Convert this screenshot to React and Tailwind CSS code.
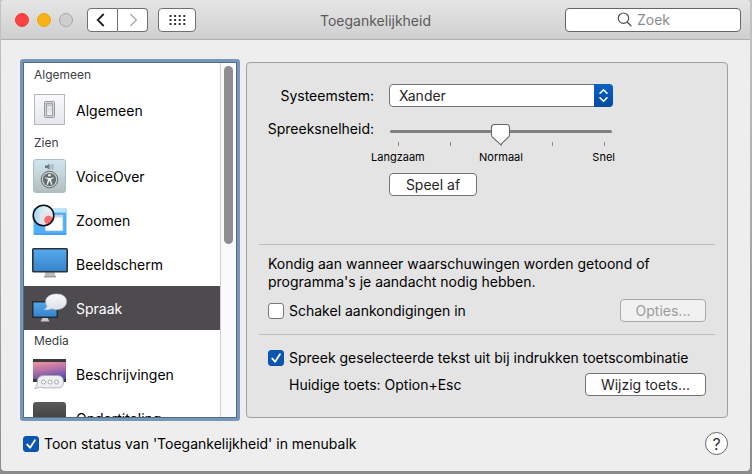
import { useState } from "react";

function SwitchIcon() {
  return (
    <svg width="34" height="34" viewBox="0 0 34 34" aria-hidden="true">
      <defs>
        <linearGradient id="sw" x1="0" y1="0" x2="0" y2="1">
          <stop offset="0" stopColor="#fafafd" />
          <stop offset="1" stopColor="#e4e6ec" />
        </linearGradient>
        <linearGradient id="swk" x1="0" y1="0" x2="0" y2="1">
          <stop offset="0" stopColor="#c4c5c9" />
          <stop offset="1" stopColor="#f7f7f9" />
        </linearGradient>
      </defs>
      <rect x="1.5" y="1.5" width="30" height="30" fill="url(#sw)" stroke="#b6b7bb" />
      <rect x="11.5" y="8.5" width="10" height="16" rx="1" fill="#d5d6da" stroke="#97989c" />
      <rect x="13.5" y="10.5" width="6" height="12" fill="url(#swk)" stroke="#a3a4a8" />
      <path d="M14 14.5h5" stroke="#f4f4f6" />
    </svg>
  );
}

function VoiceOverIcon() {
  return (
    <svg width="34" height="34" viewBox="0 0 34 34" aria-hidden="true">
      <defs>
        <linearGradient id="vo" x1="0" y1="0" x2="0" y2="1">
          <stop offset="0" stopColor="#cfe6ef" />
          <stop offset="0.5" stopColor="#c3d3d8" />
          <stop offset="1" stopColor="#b2bcbd" />
        </linearGradient>
      </defs>
      <rect x="0.5" y="0.5" width="32" height="33" rx="2.5" fill="url(#vo)" stroke="#a9bcc2" />
      <path d="M12 6.5h2l2.5-1.8v6L14 9h-2z" fill="#6b7880" />
      <path d="M17.8 5.8q1 2 0 4M19.5 5q1.400 2.800 0 5.600" fill="none" stroke="#8b989e" strokeWidth="0.8" />
      <circle cx="16.500" cy="20.500" r="8.300" fill="#c9d2d4" stroke="#5f6668" strokeWidth="1" />
      <circle cx="16.500" cy="20.500" r="6.600" fill="#646c6f" />
      <circle cx="16.500" cy="16.300" r="1.300" fill="#eef3f4" />
      <path d="M12.300 18.300l3 .6h2.400l3-.6.200 1-2.700.8.200 2 1 3.500-1 .3-1.600-3.700h-.6l-1.600 3.700-1-.3 1-3.500.2-2-2.700-.8z" fill="#eef3f4" />
    </svg>
  );
}

function ZoomIcon() {
  return (
    <svg width="36" height="34" viewBox="0 0 36 34" aria-hidden="true">
      <defs>
        <linearGradient id="zl" x1="0" y1="0" x2="1" y2="0">
          <stop offset="0" stopColor="#9ed4f7" />
          <stop offset="0.5" stopColor="#dcecf5" />
          <stop offset="1" stopColor="#f2f2f4" />
        </linearGradient>
      </defs>
      <rect x="1.500" y="5" width="33" height="27" rx="1.500" fill="#50b0fa" />
      <path d="M1.500 9.500V6.500q0-1.500 1.500-1.500h30q1.500 0 1.500 1.500v3z" fill="#bfe3fb" />
      <path d="M1.500 31h33" stroke="#3a95e2" />
      <rect x="13" y="12" width="18" height="16" fill="#fff" stroke="#8fb5cf" strokeWidth="0.7" />
      <rect x="14" y="12" width="17" height="2.500" fill="#cbd3d9" />
      <circle cx="11.500" cy="12.500" r="10.300" fill="url(#zl)" />
      <path d="M8 10l13-1 .8 4-2 5-5 3.500H8z" fill="#e3e4e8" />
      <circle cx="16.500" cy="17" r="4.300" fill="#f56b6e" />
      <circle cx="11.500" cy="12.500" r="10.300" fill="none" stroke="#0d1117" strokeWidth="1.600" />
    </svg>
  );
}

function DisplayIcon() {
  return (
    <svg width="36" height="34" viewBox="0 0 36 34" aria-hidden="true">
      <defs>
        <linearGradient id="dp" x1="0" y1="0" x2="0" y2="1">
          <stop offset="0" stopColor="#58aaef" />
          <stop offset="1" stopColor="#3583c8" />
        </linearGradient>
      </defs>
      <path d="M13.500 25h9l1 4.500h-11z" fill="#b9babc" />
      <path d="M12 29h12v1.500H12z" fill="#9c9d9f" />
      <rect x="0.800" y="1.800" width="34.400" height="23" rx="0.800" fill="url(#dp)" stroke="#2a323b" strokeWidth="1.600" />
    </svg>
  );
}

function SpeechIcon() {
  return (
    <svg width="36" height="34" viewBox="0 0 36 34" aria-hidden="true">
      <defs>
        <linearGradient id="sd" x1="0" y1="0" x2="0" y2="1">
          <stop offset="0" stopColor="#56a6ea" />
          <stop offset="1" stopColor="#3583c8" />
        </linearGradient>
        <linearGradient id="sb" x1="0" y1="0" x2="0" y2="1">
          <stop offset="0" stopColor="#fafafc" />
          <stop offset="1" stopColor="#dcdfe6" />
        </linearGradient>
      </defs>
      <path d="M11 26h4l2.500 4.500h-9z" fill="#c8c8ca" />
      <rect x="0.800" y="10.800" width="24.500" height="15.500" fill="url(#sd)" stroke="#202a35" strokeWidth="1.400" />
      <path d="M24.500 3C31 3 34.500 6.200 34.500 10.500S31 18.500 24.500 18.500c-2 0-3.500-.3-5-.9-1.500.9-4 1.300-7.500.9 1.900-.9 2.900-2 3.200-3.400-1-1.300-1.500-2.900-1.500-4.600C13.700 6.200 18 3 24.500 3z" fill="url(#sb)" stroke="#c9ccd4" strokeWidth="0.600" />
    </svg>
  );
}

function DescriptionsIcon() {
  return (
    <svg width="34" height="34" viewBox="0 0 34 34" aria-hidden="true">
      <defs>
        <linearGradient id="ds" x1="0.200" y1="0" x2="0.500" y2="1">
          <stop offset="0" stopColor="#ec8f9f" />
          <stop offset="0.500" stopColor="#b270a8" />
          <stop offset="1" stopColor="#5a4fa8" />
        </linearGradient>
      </defs>
      <rect x="0" y="2" width="33" height="23" fill="#3a393b" />
      <rect x="0" y="5" width="33" height="17" fill="url(#ds)" />
      <path d="M11 18.500h13.500q6 0 6 6.200t-6 6.200H11c-2 0-3-.4-4-1-1.200 1-3 1.400-5.500 1.400 1.500-1.300 2.400-2.500 2.700-4.400Q3.500 18.500 11 18.500z" fill="#eeeff3" stroke="#a4a6ad" strokeWidth="0.800" />
      <g fill="#fff" stroke="#a0a2a8" strokeWidth="0.900">
        <circle cx="10.500" cy="25" r="2" />
        <circle cx="17" cy="25" r="2" />
        <circle cx="23.500" cy="25" r="2" />
      </g>
    </svg>
  );
}

function CaptionsIcon() {
  return (
    <svg width="34" height="34" viewBox="0 0 34 34" aria-hidden="true">
      <defs>
        <linearGradient id="cc" x1="0" y1="0" x2="0" y2="1">
          <stop offset="0" stopColor="#5a5a5b" />
          <stop offset="1" stopColor="#2c2c2d" />
        </linearGradient>
      </defs>
      <rect x="0" y="1" width="33" height="33" rx="3" fill="url(#cc)" />
    </svg>
  );
}

const groups = [
  { title: "Algemeen", items: [{ name: "Algemeen", Icon: SwitchIcon }] },
  {
    title: "Zien",
    items: [
      { name: "VoiceOver", Icon: VoiceOverIcon },
      { name: "Zoomen", Icon: ZoomIcon },
      { name: "Beeldscherm", Icon: DisplayIcon },
      { name: "Spraak", Icon: SpeechIcon },
    ],
  },
  {
    title: "Media",
    items: [
      { name: "Beschrijvingen", Icon: DescriptionsIcon },
      { name: "Ondertiteling", Icon: CaptionsIcon },
    ],
  },
];

function Sidebar() {
  const [selected, setSelected] = useState("Spraak");
  return (
    <nav
      aria-label="Categorieën"
      className="flex h-[362px] w-[220px] shrink-0 rounded-[3px] border-3 border-[#7896b8]"
    >
      <div className="flex min-w-0 flex-1 border border-[#4f6a8a] bg-white">
        <div className="min-w-0 flex-1 overflow-y-auto pt-px [scrollbar-width:none]">
          {groups.map((group) => (
            <section key={group.title} className="first:[&>h2]:mb-0.5">
              <h2 className="h-[22px] pl-2.5 text-xs leading-[22px] text-[#404040]">{group.title}</h2>
              <ul>
                {group.items.map(({ name, Icon }) => (
                  <li key={name}>
                    <button
                      type="button"
                      onClick={() => setSelected(name)}
                      className={
                        name === selected
                          ? "flex h-11 w-full items-center bg-[#4d4b4d] pl-2 text-left text-white"
                          : "flex h-11 w-full items-center pl-2 text-left text-black"
                      }
                    >
                      <span className="flex w-[36px] shrink-0 justify-center">
                        <Icon />
                      </span>
                      <span className="pt-0.5 pl-2">{name}</span>
                    </button>
                  </li>
                ))}
              </ul>
            </section>
          ))}
        </div>
        <div className="w-4 shrink-0 border-l border-[#d0d0d0] bg-[#fafafa] px-[3px] pt-[3px]">
          <div className="h-[178px] rounded-full bg-[#8e8e8e]" />
        </div>
      </div>
    </nav>
  );
}

function Checkbox({ id, label, defaultChecked }) {
  return (
    <div className="flex items-center gap-[5px]">
      <span className="relative flex size-4 shrink-0">
        <input
          id={id}
          type="checkbox"
          defaultChecked={defaultChecked}
          className="peer size-full appearance-none rounded-[3px] border border-[#777] bg-white checked:border-[#0a53ab] checked:bg-[#0a56b0]"
        />
        <svg
          viewBox="0 0 15 15"
          aria-hidden="true"
          className="pointer-events-none absolute inset-0 hidden peer-checked:block"
        >
          <path d="M4 8l2.600 3L11.200 4" fill="none" stroke="#fff" strokeWidth="1.700" strokeLinecap="round" strokeLinejoin="round" />
        </svg>
      </span>
      <label htmlFor={id}>{label}</label>
    </div>
  );
}

function PushButton({ children, disabled, className }) {
  return (
    <button
      type="button"
      disabled={disabled}
      className={`h-[23px] rounded-[4px] border border-[#737373] bg-white leading-[20px] text-[#262626] disabled:border-[#a9a9a9] disabled:bg-[#f1f1f1] disabled:text-[#9b9b9b] ${className}`}
    >
      {children}
    </button>
  );
}

function SpeedSlider() {
  const [speed, setSpeed] = useState(50);
  return (
    <div className="w-[224px]">
      <div className="relative h-[24px]">
        <svg width="224" height="24" viewBox="0 0 224 24" aria-hidden="true">
          <rect x="1" y="7" width="222" height="3" rx="1.500" fill="#808080" />
          <path d="M9.500 19v4M61.500 19v4M112.500 19v4M163.500 19v4M215.500 19v4" stroke="#8a8a8a" />
          <path
            transform={`translate(${(speed - 50) * 2.06} 0)`}
            d="M105.500 1.500h12q3 0 3 3v7q0 1.500-1 2.600l-8 7.500-8-7.500q-1-1.100-1-2.600v-7q0-3 3-3z"
            fill="#fff"
            stroke="#666"
            strokeWidth="1.100"
          />
        </svg>
        <input
          id="speed"
          type="range"
          value={speed}
          onChange={(event) => setSpeed(Number(event.target.value))}
          className="absolute inset-0 w-full opacity-0"
        />
      </div>
      <div className="-mx-5 mt-0.5 grid grid-cols-3 text-[11px] leading-4 text-black">
        <span className="pl-0.5">Langzaam</span>
        <span className="text-center">Normaal</span>
        <span className="pr-[18px] text-right">Snel</span>
      </div>
    </div>
  );
}

function SpeechPanel() {
  return (
    <main className="flex min-w-0 flex-1 flex-col rounded-[4px] border border-[#a0a0a0] bg-[#e4e4e4] px-3">
      <div className="grid h-[181px] shrink-0 grid-cols-[115px_1fr] content-start gap-x-[15px] pt-[21px]">
        <label htmlFor="voice" className="text-right leading-[23px]">
          Systeemstem:
        </label>
        <div className="relative h-[23px] w-[224px]">
          <select
            id="voice"
            className="block size-full appearance-none rounded-[4px] border border-[#737373] bg-white pl-[9px] leading-[20px] text-[#262626]"
          >
            <option>Xander</option>
          </select>
          <span className="pointer-events-none absolute inset-y-0 right-0 flex w-[19px] items-center justify-center rounded-r-[4px] bg-linear-to-b from-[#0b62c4] to-[#064a9c]">
            <svg width="11" height="15" viewBox="0 0 11 15" fill="none" stroke="#fff" strokeWidth="1.600" strokeLinecap="round" strokeLinejoin="round" aria-hidden="true">
              <path d="M2 5.200l3.500-3.500L9 5.200M2 9.800l3.500 3.500L9 9.800" />
            </svg>
          </span>
        </div>
        <label htmlFor="speed" className="pt-2.5 text-right leading-[23px]">
          Spreeksnelheid:
        </label>
        <div className="pt-4">
          <SpeedSlider />
        </div>
        <div className="col-start-2 pt-2">
          <PushButton className="w-[88px]">Speel af</PushButton>
        </div>
      </div>

      <section className="border-t border-[#bdbdbd] pt-2.5 pr-2 pl-[9px]">
        <p className="leading-[18px]">
          Kondig aan wanneer waarschuwingen worden getoond of
          <br />
          programma's je aandacht nodig hebben.
        </p>
        <div className="flex items-center justify-between pt-2 pr-px pb-3">
          <Checkbox id="announce" label="Schakel aankondigingen in" />
          <PushButton disabled className="w-[86px]">
            Opties...
          </PushButton>
        </div>
      </section>

      <section className="border-t border-[#bdbdbd] pt-[13px] pr-2 pb-[21px] pl-[9px]">
        <Checkbox
          id="speak"
          defaultChecked
          label="Spreek geselecteerde tekst uit bij indrukken toetscombinatie"
        />
        <div className="flex items-center justify-between pt-[5px] pr-px pl-[21px]">
          <span>Huidige toets: Option+Esc</span>
          <PushButton className="w-[121px]">Wijzig toets...</PushButton>
        </div>
      </section>
    </main>
  );
}

function TitleBar() {
  return (
    <header className="grid h-10 grid-cols-[1fr_auto_1fr] items-center border-b border-[#b0b0b0] bg-linear-to-b from-[#e6e6e6] to-[#cfcfcf] px-[9px]">
      <div className="flex items-center pl-[5px]">
        <div className="flex gap-2">
          <button type="button" aria-label="Sluit" className="size-3.5 rounded-full border border-[#ee3a38] bg-[#fe4141]" />
          <button type="button" aria-label="Minimaliseer" className="size-3.5 rounded-full border border-[#e9a50f] bg-[#f8b217]" />
          <button type="button" aria-label="Vergroot" className="size-3.5 rounded-full border border-[#a6a6a6] bg-[#cfcfcf]" />
        </div>
        <div className="ml-3.5 flex">
          <button type="button" aria-label="Vorige" className="flex h-6 w-[31px] items-center justify-center rounded-l-[4px] border border-[#707070] bg-white pr-1">
            <svg width="9" height="14" viewBox="0 0 9 14" fill="none" stroke="#222" strokeWidth="1.800" aria-hidden="true">
              <path d="M7.700 1L1.700 7l6 6" />
            </svg>
          </button>
          <button type="button" aria-label="Volgende" className="flex h-6 w-[30px] items-center justify-center rounded-r-[4px] border border-l-0 border-[#707070] bg-white pl-0.5">
            <svg width="9" height="14" viewBox="0 0 9 14" fill="none" stroke="#adadad" strokeWidth="1.500" aria-hidden="true">
              <path d="M1.300 1l6 6-6 6" />
            </svg>
          </button>
        </div>
        <button type="button" aria-label="Toon alles" className="ml-2.5 flex h-6 w-[38px] items-center justify-center rounded-[4px] border border-[#707070] bg-white">
          <svg width="17" height="12" viewBox="0 0 17 12" aria-hidden="true">
            <path
              d="M0.500 2h16M0.500 6h16M0.500 10h16"
              stroke="#333"
              strokeWidth="2"
              strokeDasharray="2 2.600"
            />
          </svg>
        </button>
      </div>
      <h1 className="pt-0.5 text-[#5a5a5a]">Toegankelijkheid</h1>
      <div className="flex h-6 w-[176px] items-center gap-[5px] justify-self-end rounded-[4px] border border-[#666] bg-white pl-[51px]">
        <svg width="15" height="15" viewBox="0 0 15 15" className="shrink-0" fill="none" stroke="#4c4c4c" strokeWidth="1.200" strokeLinecap="round" aria-hidden="true">
          <circle cx="6.500" cy="6.200" r="5.200" />
          <path d="M10.300 10.200l3.700 3.600" />
        </svg>
        <input
          type="search"
          aria-label="Zoek"
          placeholder="Zoek"
          className="w-full min-w-0 bg-transparent outline-none placeholder:text-[#8c8c8c]"
        />
      </div>
    </header>
  );
}

export default function App() {
  return (
    <div className="min-h-screen bg-linear-to-b from-[#c4c4c4] to-[#8c8c8c] pr-0.5 pb-[3px] pl-px font-['Inter','Liberation_Sans',sans-serif] text-sm leading-5 text-black">
      <div className="overflow-hidden rounded-[4px] bg-[#eeeeee]">
        <TitleBar />
        <div className="flex items-center gap-1.5 pt-[19px] pr-[22px] pl-[19px]">
          <Sidebar />
          <SpeechPanel />
        </div>
        <footer className="flex items-center justify-between pt-[11px] pr-[22px] pb-4 pl-[22px]">
          <Checkbox id="menubar" defaultChecked label="Toon status van 'Toegankelijkheid' in menubalk" />
          <button
            type="button"
            aria-label="Help"
            className="flex size-[23px] items-center justify-center rounded-full border border-[#666] bg-white text-base text-[#333]"
          >
            ?
          </button>
        </footer>
      </div>
    </div>
  );
}
